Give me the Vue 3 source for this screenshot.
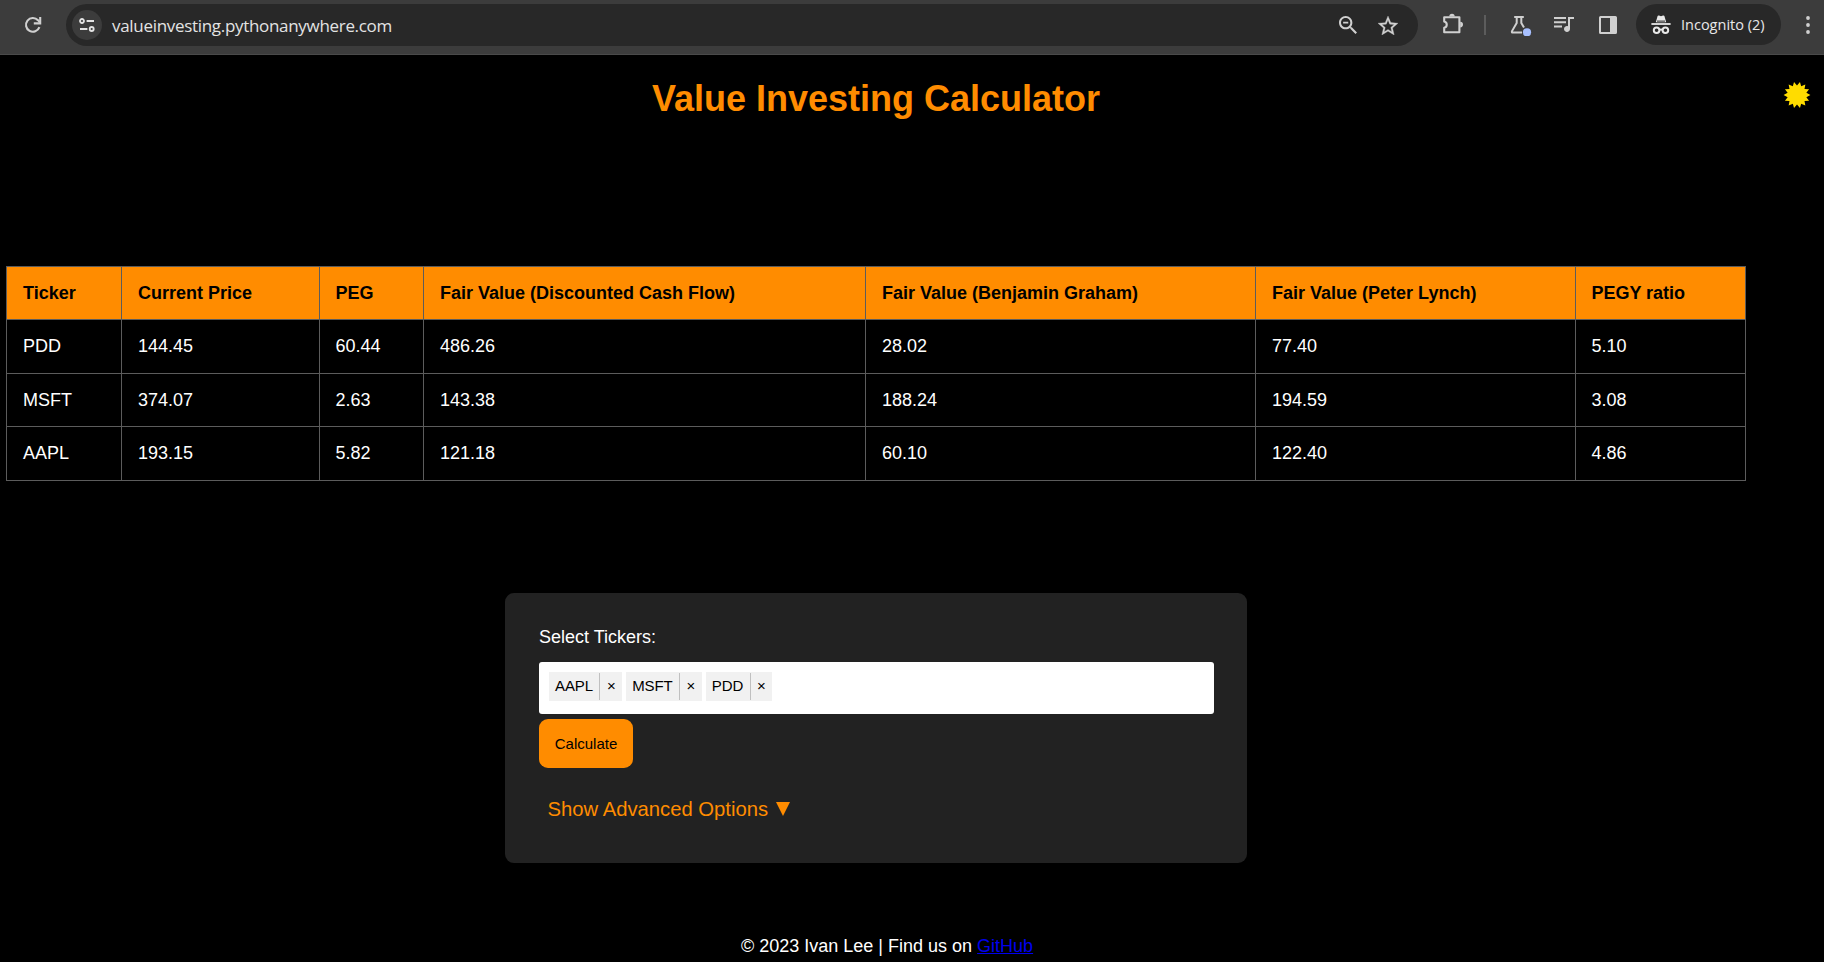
<script setup>
const columns = ['Ticker', 'Current Price', 'PEG', 'Fair Value (Discounted Cash Flow)', 'Fair Value (Benjamin Graham)', 'Fair Value (Peter Lynch)', 'PEGY ratio']
const rows = [
  ['PDD', '144.45', '60.44', '486.26', '28.02', '77.40', '5.10'],
  ['MSFT', '374.07', '2.63', '143.38', '188.24', '194.59', '3.08'],
  ['AAPL', '193.15', '5.82', '121.18', '60.10', '122.40', '4.86']
]
const tickers = ['AAPL', 'MSFT', 'PDD']

const SPIKES = 14
const sunPoints = Array.from({ length: SPIKES * 2 }, (_, i) => {
  const r = i % 2 ? 9.6 : 13.4
  const a = (Math.PI / SPIKES) * (i + 1) - Math.PI / 2
  return `${(14 + r * Math.cos(a)).toFixed(2)},${(14 + r * Math.sin(a)).toFixed(2)}`
}).join(' ')
</script>

<template>
  <div class="window">
    <header class="toolbar">
      <svg class="reload" viewBox="0 0 20 20" fill="none" stroke="#d0d0d0" stroke-width="2.1">
        <path d="M16.4 12.2A6.9 6.9 0 1 1 15 5.2L17 7.6" />
        <path d="M17.2 2v6.4h-6.4" />
      </svg>
      <div class="address">
        <span class="site">
          <svg viewBox="0 0 16 14" width="16" height="14" fill="none" stroke="#e3e3e3" stroke-width="1.8">
            <circle cx="3" cy="3" r="2" /><path d="M7.6 3H15M1 11h7.4" /><circle cx="12.7" cy="11" r="2" />
          </svg>
        </span>
        <span class="url">valueinvesting.pythonanywhere.com</span>
        <svg class="zoom" viewBox="3 3 17.5 17.5" fill="#d0d0d0">
          <path d="M15.5 14h-.79l-.28-.27C15.41 12.59 16 11.11 16 9.5 16 5.91 13.09 3 9.5 3S3 5.91 3 9.5 5.91 16 9.5 16c1.61 0 3.09-.59 4.23-1.57l.27.28v.79l5 4.99L20.49 19l-4.99-5zm-6 0C7.01 14 5 11.99 5 9.5S7.01 5 9.5 5 14 7.01 14 9.5 11.99 14 9.5 14zM7 8.6h5v1.8H7z" />
        </svg>
        <svg class="star" viewBox="2 2 20 19" fill="#d0d0d0" stroke="#d0d0d0" stroke-width=".3">
          <path d="M22 9.24l-7.19-.62L12 2 9.19 8.63 2 9.24l5.46 4.73L5.82 21 12 17.27 18.18 21l-1.63-7.03L22 9.24zM12 15.4l-3.76 2.27 1-4.28-3.32-2.88 4.38-.38L12 6.1l1.71 4.04 4.38.38-3.32 2.88 1 4.28L12 15.4z" />
        </svg>
      </div>
      <svg class="puzzle" viewBox="0 0 22 22" fill="none" stroke="#d0d0d0" stroke-width="2.1" stroke-linejoin="round">
        <path d="M2.2 4.2H17.4V19.3H2.2V14.8C5.6 14 5.6 9.4 2.2 8.6Z" />
        <path d="M7.3 3.4a2.7 2.7 0 0 1 5.4 0ZM18.2 8.8a2.8 2.8 0 0 1 0 5.6Z" fill="#d0d0d0" stroke="none" />
      </svg>
      <span class="separator"></span>
      <svg class="flask" viewBox="0 0 22 22" fill="none" stroke="#d0d0d0" stroke-width="2">
        <path d="M4.2 2.9H13.8M6.7 3V9L2 17.1Q1.4 18.6 2.8 18.6H12M11.3 3V9L14 13.6" />
        <circle cx="17" cy="18.3" r="4.1" fill="#a8c0ff" stroke="none" />
      </svg>
      <svg class="music" viewBox="3 5 20 16" fill="#d0d0d0">
        <path d="M15 5H3v2h12V5zm0 4.2H3v2h12v-2zM3 15.4h8v-2H3v2zM17 5v9.18c-.31-.11-.65-.18-1-.18-1.66 0-3 1.34-3 3s1.34 3 3 3 3-1.34 3-3V7h4V5h-6z" />
      </svg>
      <svg class="side" viewBox="0 0 18 18">
        <path fill="#d0d0d0" fill-rule="evenodd" d="M1.6 0H16.4Q18 0 18 1.6V16.4Q18 18 16.4 18H1.6Q0 18 0 16.4V1.6Q0 0 1.6 0ZM2 2V16H11V2Z" />
      </svg>
      <div class="incognito">
        <svg viewBox="0 0 20 20" width="20" height="20" fill="#e8e8e8">
          <path d="M6.6 1.1Q7 .2 8 .6L10 1.3L12 .6Q13 .2 13.4 1.1L15.2 7.2H4.8Z" />
          <path d="M.4 8.1H19.6V9.9H.4Z" />
          <path fill="none" stroke="#e8e8e8" stroke-width="2" d="M8.2 15Q10 13.8 11.8 15" />
          <circle cx="5.6" cy="15.3" r="2.8" fill="none" stroke="#e8e8e8" stroke-width="2" />
          <circle cx="14.4" cy="15.3" r="2.8" fill="none" stroke="#e8e8e8" stroke-width="2" />
          <path d="M6 5.6H14V6.6H6Z" fill="#282828" />
        </svg>
        <span>Incognito (2)</span>
      </div>
      <svg class="dots" viewBox="0 0 4 18" fill="#d0d0d0">
        <circle cx="2" cy="2" r="1.9" /><circle cx="2" cy="9" r="1.9" /><circle cx="2" cy="16" r="1.9" />
      </svg>
    </header>

    <main class="page">
      <svg class="sun" viewBox="0 0 28 28"><polygon :points="sunPoints" fill="#ffdc00" /></svg>
      <h1>Value Investing Calculator</h1>

      <table>
        <colgroup><col v-for="n in 7" :key="n" :class="'c' + n" /></colgroup>
        <thead>
          <tr><th v-for="c in columns" :key="c">{{ c }}</th></tr>
        </thead>
        <tbody>
          <tr v-for="r in rows" :key="r[0]"><td v-for="(v, i) in r" :key="i">{{ v }}</td></tr>
        </tbody>
      </table>

      <section class="panel">
        <label>Select Tickers:</label>
        <div class="select">
          <div v-for="t in tickers" :key="t" class="chip">
            <span class="name">{{ t }}</span><span class="remove">×</span>
          </div>
        </div>
        <button type="button">Calculate</button>
        <div class="advanced">
          <span>Show Advanced Options</span>
          <svg viewBox="0 0 14 14" width="14" height="14"><path d="M0 0H14L7 14Z" fill="#ff8c00" /></svg>
        </div>
      </section>

      <footer>© 2023 Ivan Lee | Find us on <a href="#">GitHub</a></footer>
    </main>
  </div>
</template>

<style>
body { background: #000; overflow: hidden; }
</style>

<style scoped>
.window {
  width: 1824px; height: 962px; overflow: hidden; background: #000; color: #fff;
  font-family: "Liberation Sans", Arial, sans-serif; font-size: 18px;
}
svg { display: block; flex: none; }
.toolbar {
  box-sizing: border-box; height: 55px; display: flex; align-items: flex-start;
  background: #3c3c3c; border-bottom: 1px solid #4a4a4a;
  font-family: "Open Sans", "Noto Sans", sans-serif;
}
.reload { width: 20px; height: 20px; margin: 15px 0 0 23px; }
.address {
  width: 1352px; height: 42px; margin: 4px 0 0 23px; border-radius: 21px; background: #282828;
  display: flex; align-items: flex-start; flex: none;
}
.site {
  width: 30px; height: 30px; margin: 6px 0 0 6px; border-radius: 50%; background: #3c3c3c;
  display: flex; align-items: center; justify-content: center;
}
.url { width: 1226px; margin-left: 10px; padding-right: 1px; line-height: 44px; font-size: 17px; letter-spacing: -0.31px; color: #e3e3e3; }
.zoom { width: 18px; height: 18px; margin-top: 12px; }
.star { width: 20px; height: 19px; margin: 12px 0 0 21px; }
.puzzle { width: 22px; height: 22px; margin: 13px 0 0 24px; }
.separator { width: 2px; height: 20px; margin: 15px 0 0 20px; background: #5c5c5c; }
.flask { width: 22px; height: 22px; margin: 14px 0 0 24px; }
.music { width: 20px; height: 16px; margin: 17px 0 0 22px; }
.side { width: 18px; height: 18px; margin: 16px 0 0 25px; }
.incognito {
  box-sizing: border-box; width: 145px; height: 41px; margin: 4px 0 0 19px; padding-left: 15px;
  border-radius: 21px; background: #282828; display: flex; align-items: center; gap: 10px;
  font-size: 14.5px; color: #e8e8e8; flex: none; white-space: nowrap;
}
.dots { width: 4px; height: 18px; margin: 16px 0 0 25px; }

.page { position: relative; }
.sun { position: absolute; left: 1783px; top: 26px; width: 28px; height: 28px; }
h1 {
  box-sizing: border-box; margin: 0; padding-top: 23px; width: 1752px; height: 211px; line-height: 42px;
  font-size: 36px; text-align: center; color: #ff8c00;
}
table { width: 1740px; margin-left: 6px; table-layout: fixed; border-spacing: 0; }
.c1 { width: 116px; } .c2 { width: 198px; } .c3 { width: 104px; } .c4 { width: 442px; }
.c5 { width: 390px; } .c6 { width: 320px; } .c7 { width: 170px; }
th, td {
  box-sizing: border-box; height: 54px; padding: 0 0 0 16px; text-align: left; vertical-align: middle;
  border-right: 1px solid #5c5c5c; border-bottom: 1px solid #5c5c5c; line-height: 20px;
}
th { border-top: 1px solid #5c5c5c; background: #ff8c00; color: #000; }
td { padding-bottom: 1px; }
tbody tr:nth-child(2) td { height: 53px; padding-bottom: 0; }
th:nth-child(4n + 3), td:nth-child(4n + 3) { padding-left: 15.4px; }
th:first-child, td:first-child { border-left: 1px solid #5c5c5c; }

.panel {
  box-sizing: border-box; width: 742px; height: 270px; margin: 112px 0 0 505px; padding: 34px 33px 34px 34px;
  border-radius: 9px; background: #222;
}
label { display: block; height: 35px; line-height: 20px; }
.select {
  box-sizing: border-box; height: 52px; padding: 10px; border-radius: 3px; background: #fff;
  display: flex; gap: 4px;
}
.chip { height: 29px; display: flex; background: #f1f1f1; color: #000; font-size: 15px; line-height: 27px; }
.name { padding: 0 6.5px 0 6px; letter-spacing: -0.1px; }
.remove {
  width: 22.7px; height: 27px; margin-top: 1px; border-left: 1px solid #c0c0c0; box-sizing: border-box;
  text-align: center; line-height: 25px;
}
button {
  display: block; width: 94px; height: 49px; margin-top: 5px; padding: 0; border: 0; border-radius: 9px;
  background: #ff8c00; color: #000; font: 15px "Liberation Sans", Arial, sans-serif;
}
.advanced {
  display: flex; align-items: center; gap: 8px; margin: 29px 0 0 8.5px; line-height: 24px;
  font-size: 20.25px; color: #ff8c00;
}
footer { margin: 73px 0 0 741px; line-height: 20px; white-space: nowrap; }
a { color: #0000ee; }
</style>
